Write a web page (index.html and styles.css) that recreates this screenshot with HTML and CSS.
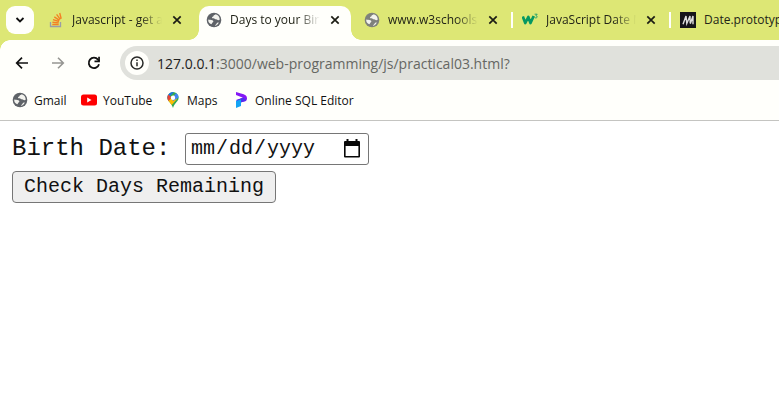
FILE: index.html
```html
<!DOCTYPE html>
<html lang="en">
<head>
<meta charset="utf-8">
<title>Days to your Birthday</title>
<link rel="stylesheet" href="styles.css">
</head>
<body>
<svg class="defs" width="0" height="0" aria-hidden="true">
  <symbol id="globe" viewBox="0 0 16 16"><circle cx="8" cy="8" r="7.3" fill="currentColor"/><path class="land" d="M2.2 7.4c1 .3 2.8.2 4.2.9 1.200.6 1.300 1.900.2 2.300-.7.300-.4 1.300-1.300 1.700C3.300 11.400 2 9.800 2.200 7.400zM9.600 2.200c-.3 1-1.900.6-2.100 1.700-.2.900-1.800.7-1.500 1.900.3 1 2.200.5 3 1.100.7.600 1.500.1 2.200.8.7.800 1.900.3 2.500 0 .2-2.500-1.400-4.800-4.100-5.500zM12.800 10.500c-1.300-.2-2.100.4-2.300 1.300-.2.800-1.300.9-1.600 1.900 1.700-.2 3.200-1.300 3.900-3.200z"/></symbol>
  <symbol id="close" viewBox="0 0 10 10"><path d="M1.300 1.300l7.400 7.400M8.700 1.300L1.300 8.700" fill="none" stroke="#1c1d14" stroke-width="1.700"/></symbol>
</svg>
<header class="browser">
  <div class="tabstrip">
    <div class="search"><svg width="10" height="8" viewBox="0 0 10 8"><path d="M1.500 2l3.500 3.500L8.500 2" fill="none" stroke="#111" stroke-width="1.800"/></svg></div>
    <div class="tab">
      <svg class="fav" viewBox="0 0 16 16"><path d="M2.500 10v4.500h10V10" fill="none" stroke="#9a9da8" stroke-width="1.300"/><path d="M4.300 12.500h6.400M4.400 10.200l6.300.7M5 7.600l6 1.900M6.300 4.800l5.200 3.500M8.600 2.400l3.700 4.900M11.700 1l1.500 5.700" fill="none" stroke="#f48024" stroke-width="1.400"/></svg>
      <span class="title so">Javascript - get ag</span><svg class="x"><use href="#close"/></svg>
    </div>
    <div class="tab active">
      <svg class="fav"><use href="#globe"/></svg>
      <span class="title days">Days to your Birthd</span><svg class="x"><use href="#close"/></svg>
    </div>
    <div class="tab lime">
      <svg class="fav"><use href="#globe"/></svg>
      <span class="title w3">www.w3schools.com</span><svg class="x"><use href="#close"/></svg><i class="sep"></i>
    </div>
    <div class="tab">
      <svg class="fav" viewBox="0 0 16 16"><path d="M.8 4.500l2.500 6.500 3-6 2.200 6 3.200-7" fill="none" stroke="#059862" stroke-width="2.700" stroke-linejoin="round"/><path d="M12.600 2.200h2.600l-1.300 1.600c1.800 0 1.600 2.200-.1 2.100-.6 0-1-.2-1.300-.6" fill="none" stroke="#169c6b" stroke-width=".9"/></svg>
      <span class="title js">JavaScript Date Me</span><svg class="x"><use href="#close"/></svg><i class="sep"></i>
    </div>
    <div class="tab">
      <svg class="fav" viewBox="0 0 16 16"><path fill="#15141a" d="M0 0h16v16H0z"/><path d="M3 12.200L6 4l.8 7.500L10 4l.2 7.200M10.300 11.800L13 4v8.200" fill="none" stroke="#ddd" stroke-width="1.400"/></svg>
      <span class="title proto">Date.prototype</span>
    </div>
  </div>
  <div class="toolbar">
    <svg class="nav" viewBox="0 0 16 16"><path d="M14 8H3M8 2.700L2.700 8 8 13.300" fill="none" stroke="#111" stroke-width="1.700"/></svg>
    <svg class="nav" viewBox="0 0 16 16"><path d="M2 8h11M8 2.700L13.300 8 8 13.300" fill="none" stroke="#969692" stroke-width="1.600"/></svg>
    <svg class="nav" viewBox="0 0 16 16"><path d="M13 9.300A5.200 5.200 0 1 1 12 4.600L13.300 6" fill="none" stroke="#111" stroke-width="1.800"/><path d="M13.900 1.800v5.400H8.500V5.500h3.700V1.800z" fill="#111"/></svg>
    <div class="omnibox">
      <span class="info"><svg width="14" height="14" viewBox="0 0 14 14"><circle cx="7" cy="7" r="6" fill="none" stroke="#292a28" stroke-width="1.500"/><path d="M7 6.200v4M7 3.500v1.500" stroke="#292a28" stroke-width="1.500"/></svg></span>
      <span class="url"><b>127.0.0.1</b>:3000/web-programming/js/practical03.html?</span>
    </div>
  </div>
  <nav class="bookmarks">
    <span class="bm gmail"><svg class="fav"><use href="#globe"/></svg><span>Gmail</span></span>
    <span class="bm youtube"><svg class="fav" viewBox="0 0 16 16"><rect y="2.500" width="16" height="11" rx="2.500" fill="#f00"/><path d="M6.200 5.500v5l4.300-2.500z" fill="#fff"/></svg><span>YouTube</span></span>
    <span class="bm maps"><svg class="fav" viewBox="0 0 16 16"><clipPath id="pin"><path d="M8 0a5.600 5.600 0 0 0-5.600 5.700C2.400 9.800 6.500 10.500 8 16c1.500-5.500 5.600-6.200 5.600-10.300A5.600 5.600 0 0 0 8 0z"/></clipPath><g clip-path="url(#pin)"><path fill="#34a853" d="M0 0h16v16H0z"/><path fill="#fbbc04" d="M0 12L9 3l3 4-7 8z"/><path fill="#1a73e8" d="M0 9l9-9H0z"/><path fill="#4285f4" d="M7 6l5-6h4v4L8 9z"/><path fill="#ea4335" d="M2 1.500L6.500 5.200 2 11H0V2z"/></g><circle cx="8" cy="5.700" r="2.200" fill="#fff"/></svg><span>Maps</span></span>
    <span class="bm sql"><svg class="fav" viewBox="0 0 16 16"><path d="M3 0l5 1.600c4 .8 6 2.200 6 4.700 0 3-2.500 3.800-6.500 3.700L3 8l7-2.200L3 3z" fill="#8417f5"/><path d="M3 8.500l7-3 3.500 2.600C11.500 10 9 9.500 7.800 11z" fill="#4d31ee"/><path d="M3 9l5-1.500V14l-5 2z" fill="#13a4f4"/></svg><span>Online SQL Editor</span></span>
  </nav>
</header>
<main>
  <div class="row">
    <span class="label">Birth Date:</span>
    <div class="date"><span>mm</span><span>/</span><span>dd</span><span>/</span><span>yyyy</span>
      <svg class="cal" width="18" height="20" viewBox="0 0 18 20"><path d="M3.500 0h2v2h7V0h2v2H16q1 0 1 1v14.500q0 1-1 1H2q-1 0-1-1V3q0-1 1-1h1.500zM2.600 7v10h12.800V7z" fill="#080808" fill-rule="evenodd"/></svg>
    </div>
  </div>
  <button type="button">Check Days Remaining</button>
</main>
</body>
</html>
```

FILE: styles.css
```css
* { box-sizing: border-box; }
body { margin: 0; width: 779px; height: 413px; overflow: hidden; background: #fff; color: #111; font-family: "Open Sans", "Noto Sans", sans-serif; }
svg { display: block; flex: none; }
.defs { position: absolute; }
.browser { height: 121px; background: #fffffb; border-bottom: 1px solid #c4c4c1; }
.tabstrip { height: 40px; display: flex; background: #dde775; overflow: hidden; }
.search { flex: none; width: 28px; height: 28px; margin: 6px 7px 0 6px; border-radius: 9px; background: #fffffb; display: grid; place-items: center; }
.tab { position: relative; flex: none; width: 158px; height: 34px; margin-top: 6px; padding: 0 0 6px 7px; display: flex; align-items: center; font-size: 12px; line-height: 20px; color: #222418; }
.fav { width: 16px; height: 16px; color: #5f6368; }
.land { fill: #f3f3ee; }
.lime .fav { color: #7f817c; }
.title { width: 90px; margin-left: 8px; overflow: hidden; white-space: nowrap; -webkit-mask-image: linear-gradient(90deg, #000 68px, transparent 90px); mask-image: linear-gradient(90deg, #000 68px, transparent 90px); }
.x { width: 10px; height: 10px; margin-left: 10px; }
.sep { width: 2px; height: 16px; margin-left: 13px; background: #fffffb; }
.active::before { content: ""; position: absolute; z-index: -1; inset: 0 6px 0 0; }
.active { width: 152px; margin-right: 6px; background: #fffffb; border-radius: 10px 10px 0 0; }
.active::before, .active::after { content: ""; position: absolute; z-index: 0; inset: auto auto 0 -10px; width: 10px; height: 10px; background: radial-gradient(circle at 0 0, transparent 9.500px, #fffffb 10px); }
.active::after { left: auto; right: -10px; background: radial-gradient(circle at 100% 0, transparent 9.500px, #fffffb 10px); }
.proto { mask-image: none; -webkit-mask-image: none; }
.toolbar { height: 46px; padding-left: 14px; display: flex; align-items: center; gap: 20px; background: radial-gradient(circle at 10px 10px, #fffffb 9.500px, #dde775 10px) 0 0 / 10px 10px no-repeat; }
.nav { width: 16px; height: 16px; }
.omnibox { flex: 1; height: 34px; margin-left: -2px; padding-left: 5px; border-radius: 17px 0 0 17px; background: #e0e1dc; display: flex; align-items: center; }
.info { flex: none; width: 24px; height: 24px; border-radius: 50%; background: #fffffb; display: grid; place-items: center; }
.url { margin-left: 8px; font-size: 14px; white-space: nowrap; color: #666763; }
.url b { font-weight: 400; color: #222; }
.bookmarks { height: 28px; padding-left: 12px; display: flex; align-items: center; font-size: 12px; }
.bm { flex: none; display: flex; align-items: center; gap: 6px; white-space: nowrap; }
.gmail { width: 69px; }
.youtube { width: 84px; }
.maps { width: 68px; }
main { padding: 12px; font-family: "Liberation Mono", monospace; }
.row { height: 38px; display: flex; align-items: flex-start; }
.label { width: 173px; font-size: 24px; line-height: 31px; white-space: nowrap; }
.date { width: 184px; height: 32px; padding-left: 5px; border: 1px solid #767676; border-radius: 3px; display: flex; align-items: center; gap: 1px; font-size: 20px; line-height: 30px; }
.cal { margin-left: 27px; }
button { display: block; width: 264px; height: 32px; padding: 0; border: 1px solid #767676; border-radius: 4px; background: #efefef; color: #111; font: 20px/28px "Liberation Mono", monospace; }
```
